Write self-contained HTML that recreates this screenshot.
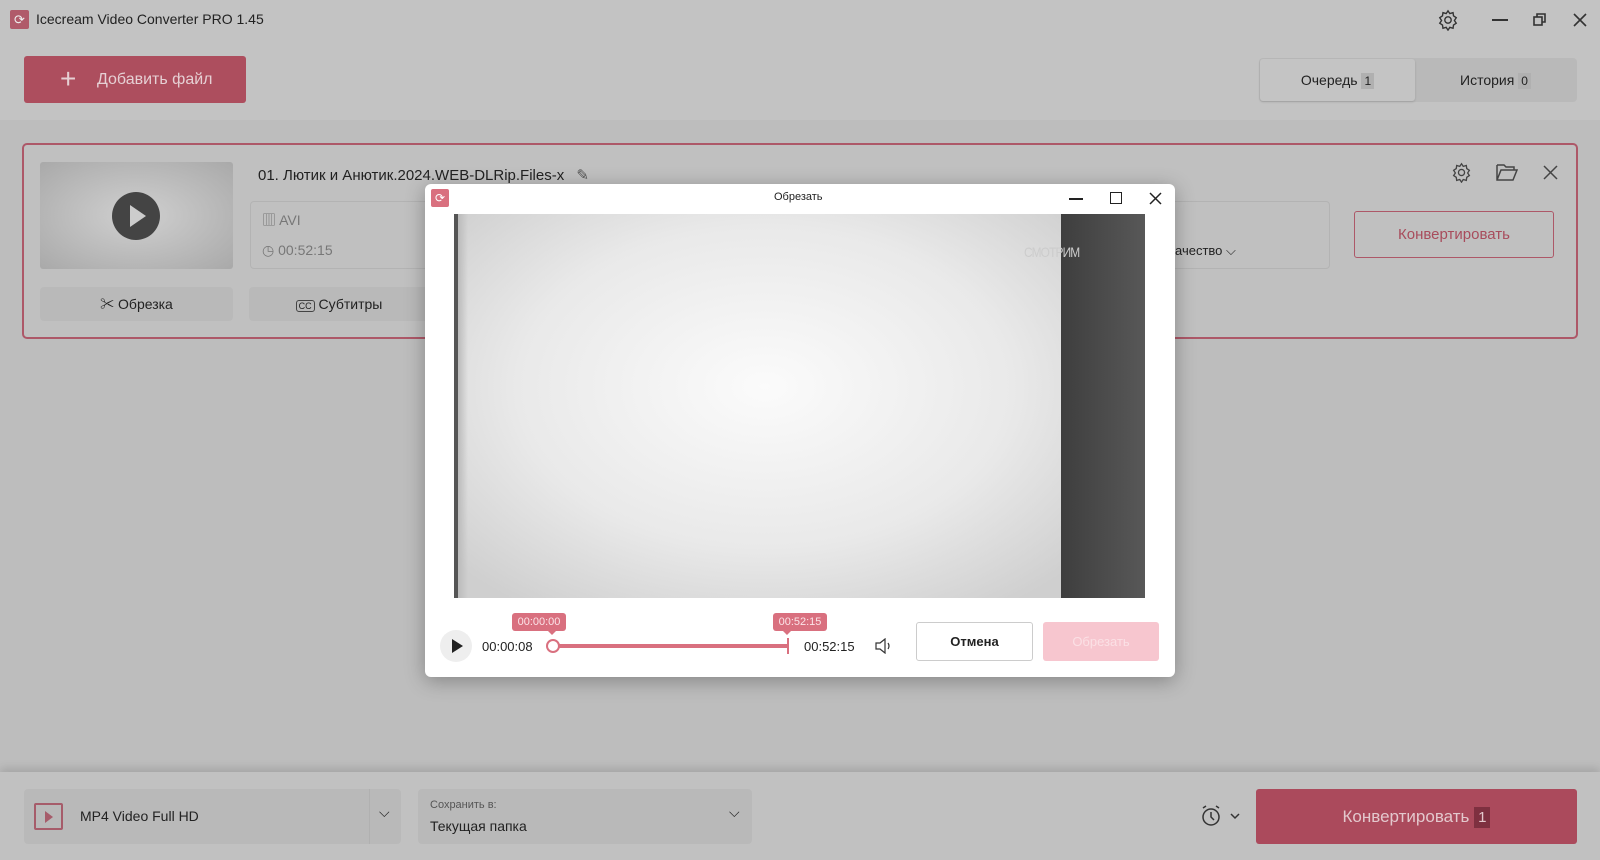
<!DOCTYPE html>
<html><head><meta charset="utf-8"><style>
*{box-sizing:border-box;margin:0;padding:0}
body{width:1600px;height:860px;overflow:hidden;background:#bdbdbd;font-family:"Liberation Sans","Noto Sans CJK SC",sans-serif;color:#222;position:relative}
.a{position:absolute}
.hdr{left:0;top:0;width:1600px;height:120px;background:#c3c3c3}
.btm{left:0;top:772px;width:1600px;height:88px;background:#c1c1c1;box-shadow:0 -4px 8px rgba(0,0,0,.12)}
.box{background:#b9b9b9;border-radius:4px}
</style></head><body>
<div class="a hdr"></div>
<div class="a" style="left:10px;top:10px;width:19px;height:19px;background:#b05a6a;border-radius:2px;color:#eee;font-size:13px;text-align:center;line-height:19px">⟳</div>
<div class="a" style="left:36px;top:11px;font-size:14px;color:#222">Icecream Video Converter PRO 1.45</div>
<svg class="a" style="left:1437px;top:9px" width="22" height="22" viewBox="0 0 24 24" fill="none" stroke="#333" stroke-width="1.5"><circle cx="12" cy="12" r="3.5"/><path d="M12 2l2 3 3.5-1 .5 3.5 3 2-2 3 2 3-3 2-.5 3.5-3.5-1-2 3-2-3-3.5 1-.5-3.5-3-2 2-3-2-3 3-2 .5-3.5 3.5 1z"/></svg>
<div class="a" style="left:1492px;top:19px;width:16px;height:2px;background:#333"></div>
<svg class="a" style="left:1532px;top:12px" width="16" height="16" fill="none" stroke="#333" stroke-width="1.6"><rect x="2" y="5" width="8" height="8"/><path d="M5 5V2h8v8h-3"/></svg>
<svg class="a" style="left:1572px;top:12px" width="16" height="16" stroke="#333" stroke-width="1.6"><path d="M2 2l12 12M14 2L2 14"/></svg>
<div class="a" style="left:24px;top:56px;width:222px;height:47px;background:#ad4e5e;border-radius:3px;color:#e6d0d4;font-size:16px;line-height:47px"><span style="position:absolute;left:36px;top:-1px;font-size:28px;font-weight:200">+</span><span style="position:absolute;left:73px">Добавить файл</span></div>
<div class="a" style="left:1259px;top:58px;width:318px;height:44px;background:#b9b9b9;border-radius:4px"></div>
<div class="a" style="left:1260px;top:59px;width:155px;height:42px;background:#c4c4c4;border-radius:3px;font-size:14px;line-height:42px;text-align:center;box-shadow:0 1px 2px rgba(0,0,0,.15)">Очередь <span style="background:#b0b0b0;padding:1px 3px;font-size:12px">1</span></div>
<div class="a" style="left:1460px;top:59px;font-size:14px;line-height:42px">История <span style="background:#b0b0b0;padding:1px 3px;font-size:12px">0</span></div>
<div class="a" style="left:22px;top:143px;width:1556px;height:196px;border:2px solid #ad5868;border-radius:5px;background:#c0c0c0"></div>
<div class="a" style="left:40px;top:162px;width:193px;height:107px;background:radial-gradient(ellipse at center,#d0d0d0,#a9a9a9);border-radius:3px"></div>
<div class="a" style="left:112px;top:192px;width:48px;height:48px;border-radius:50%;background:#444"></div>
<div class="a" style="left:130px;top:205px;width:0;height:0;border-left:16px solid #ccc;border-top:11px solid transparent;border-bottom:11px solid transparent"></div>
<div class="a" style="left:258px;top:166px;font-size:15px">01. Лютик и Анютик.2024.WEB-DLRip.Files-x <span style="color:#555;margin-left:8px">✎</span></div>
<div class="a box" style="left:250px;top:201px;width:180px;height:68px;border:1px solid #b3b3b3;background:#c0c0c0"></div>
<div class="a" style="left:262px;top:210px;font-size:14px;color:#777">▥ AVI</div>
<div class="a" style="left:262px;top:242px;font-size:14px;color:#777">◷ 00:52:15</div>
<div class="a box" style="left:40px;top:287px;width:193px;height:34px;font-size:14px;line-height:34px;text-align:center">✂ Обрезка</div>
<div class="a box" style="left:249px;top:287px;width:180px;height:34px;font-size:14px;line-height:34px;text-align:center"><span style="border:1px solid #444;border-radius:3px;font-size:9px;padding:0 2px">CC</span> Субтитры</div>
<div class="a" style="left:1100px;top:201px;width:230px;height:68px;border:1px solid #b3b3b3;border-radius:4px"></div>
<div class="a" style="left:1175px;top:243px;font-size:13px">ачество ⌵</div>
<div class="a" style="left:1354px;top:211px;width:200px;height:47px;border:1.5px solid #ad5868;border-radius:3px;color:#a84c5c;font-size:15px;line-height:45px;text-align:center">Конвертировать</div>
<svg class="a" style="left:1451px;top:162px" width="21" height="21" viewBox="0 0 24 24" fill="none" stroke="#444" stroke-width="1.5"><circle cx="12" cy="12" r="3.5"/><path d="M12 2l2 3 3.5-1 .5 3.5 3 2-2 3 2 3-3 2-.5 3.5-3.5-1-2 3-2-3-3.5 1-.5-3.5-3-2 2-3-2-3 3-2 .5-3.5 3.5 1z"/></svg>
<svg class="a" style="left:1496px;top:162px" width="22" height="20" fill="none" stroke="#444" stroke-width="1.5"><path d="M1 3h7l2 2h8v3M1 3v15h16l4-10H5L1 18"/></svg>
<svg class="a" style="left:1543px;top:165px" width="15" height="15" stroke="#444" stroke-width="1.5"><path d="M1 1l13 13M14 1L1 14"/></svg>

<div class="a btm"></div>
<div class="a box" style="left:24px;top:789px;width:377px;height:55px"></div>
<div class="a" style="left:369px;top:789px;width:1px;height:55px;background:#b0b0b0"></div>
<div class="a" style="left:34px;top:803px;width:29px;height:27px;border:2px solid #a65c6a;border-radius:2px"></div>
<div class="a" style="left:45px;top:811px;border-left:8px solid #a65c6a;border-top:6px solid transparent;border-bottom:6px solid transparent"></div>
<div class="a" style="left:80px;top:808px;font-size:14px">MP4 Video Full HD</div>
<div class="a" style="left:379px;top:804px;font-size:14px">⌵</div>
<div class="a box" style="left:418px;top:789px;width:334px;height:55px"></div>
<div class="a" style="left:430px;top:799px;font-size:11px;color:#555">Сохранить в:</div>
<div class="a" style="left:430px;top:818px;font-size:14px">Текущая папка</div>
<div class="a" style="left:729px;top:804px;font-size:14px">⌵</div>
<svg class="a" style="left:1200px;top:804px" width="44" height="24" fill="none" stroke="#333" stroke-width="1.5"><circle cx="11" cy="13" r="8"/><path d="M11 8v5l3 3M3 4l3-2M19 4l-3-2M31 10l4 4 4-4"/></svg>
<div class="a" style="left:1256px;top:789px;width:321px;height:55px;background:#ab4a5c;border-radius:3px;color:#e3c8cd;font-size:17px;line-height:55px;text-align:center">Конвертировать <span style="background:#7e3040;padding:2px 4px;font-size:15px">1</span></div>

<!-- dialog -->
<div class="a" style="left:425px;top:184px;width:750px;height:493px;background:#fff;border-radius:6px;box-shadow:0 4px 20px rgba(0,0,0,.3)"></div>
<div class="a" style="left:431px;top:189px;width:18px;height:18px;background:#d9707f;border-radius:2px;color:#fff;font-size:12px;text-align:center;line-height:18px">⟳</div>
<div class="a" style="left:774px;top:191px;font-size:11px">Обрезать</div>
<div class="a" style="left:1069px;top:198px;width:14px;height:1.5px;background:#222"></div>
<div class="a" style="left:1110px;top:192px;width:12px;height:12px;border:1.5px solid #222"></div>
<svg class="a" style="left:1149px;top:192px" width="13" height="13" stroke="#222" stroke-width="1.5"><path d="M1 1l11 11M12 1L1 12"/></svg>
<div class="a" style="left:454px;top:214px;width:691px;height:384px;background:radial-gradient(ellipse 60% 70% at 45% 45%,#fbfbfb,#e9e9e9 60%,#cfcfcf)"></div>
<div class="a" style="left:454px;top:214px;width:4px;height:384px;background:#555"></div>
<div class="a" style="left:458px;top:214px;width:10px;height:384px;background:linear-gradient(90deg,#bbb,rgba(230,230,230,0))"></div>
<div class="a" style="left:1061px;top:214px;width:84px;height:384px;background:linear-gradient(90deg,#3e3e3e,#585858)"></div>
<div class="a" style="left:1024px;top:244px;font-size:14px;color:#ccc;letter-spacing:-1px;transform:scaleX(.85);transform-origin:left">СМОТРИМ</div>
<div class="a" style="left:440px;top:630px;width:32px;height:32px;border-radius:50%;background:#eee"></div>
<div class="a" style="left:452px;top:639px;border-left:11px solid #222;border-top:7px solid transparent;border-bottom:7px solid transparent"></div>
<div class="a" style="left:482px;top:639px;font-size:13px">00:00:08</div>
<div class="a" style="left:552px;top:644px;width:236px;height:4px;background:#d9707f"></div>
<div class="a" style="left:546px;top:639px;width:14px;height:14px;border-radius:50%;border:2px solid #d9707f;background:#fff"></div>
<div class="a" style="left:787px;top:638px;width:2px;height:16px;background:#d9707f"></div>
<div class="a" style="left:512px;top:613px;width:54px;height:18px;background:#d9707f;border-radius:3px;color:#fbe4e8;font-size:11px;text-align:center;line-height:18px">00:00:00</div>
<div class="a" style="left:547px;top:630px;border-top:5px solid #d9707f;border-left:5px solid transparent;border-right:5px solid transparent"></div>
<div class="a" style="left:773px;top:613px;width:54px;height:18px;background:#d9707f;border-radius:3px;color:#fbe4e8;font-size:11px;text-align:center;line-height:18px">00:52:15</div>
<div class="a" style="left:782px;top:630px;border-top:5px solid #d9707f;border-left:5px solid transparent;border-right:5px solid transparent"></div>
<div class="a" style="left:804px;top:639px;font-size:13px">00:52:15</div>
<svg class="a" style="left:875px;top:638px" width="18" height="16" fill="none" stroke="#333" stroke-width="1.2"><path d="M1 5h4l5-4v14l-5-4H1zM13 5q2 3 0 6"/></svg>
<div class="a" style="left:916px;top:622px;width:117px;height:39px;border:1px solid #ccc;border-radius:3px;font-size:13px;font-weight:bold;line-height:37px;text-align:center">Отмена</div>
<div class="a" style="left:1043px;top:622px;width:116px;height:39px;background:#f7c6cf;border-radius:3px;color:#fbe0e5;font-size:13px;line-height:39px;text-align:center">Обрезать</div>
</body></html>
